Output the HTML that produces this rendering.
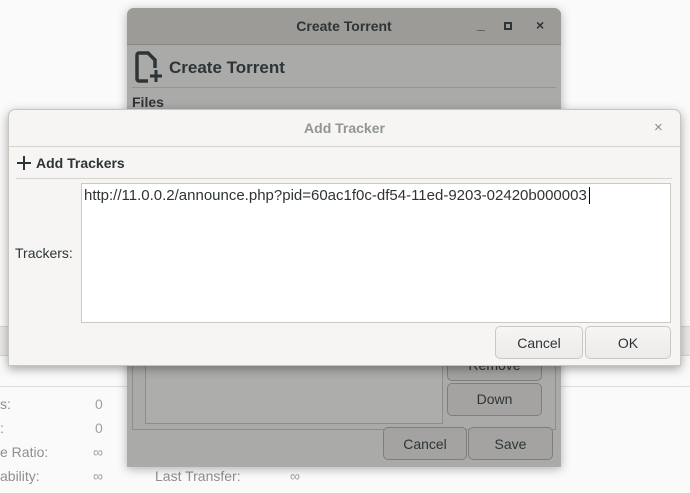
<!DOCTYPE html>
<html><head><style>
*{box-sizing:border-box;margin:0;padding:0}
body{width:690px;height:493px;overflow:hidden;background:#fafafa;font-family:"Liberation Sans",sans-serif;font-size:14px;color:#2e3436;position:relative}
.abs{position:absolute}
.btn{position:absolute;border:1px solid #cdc7c2;border-radius:5px;background:linear-gradient(#f6f5f4,#edebe9);text-align:center;font-size:14px;color:#2e3436}
.dbtn{position:absolute;border:1px solid #807e7b;border-radius:5px;background:#a4a3a1;text-align:center;font-size:14px;color:#2e3436}
</style></head><body>
<div class="abs" style="left:0;top:326px;width:690px;height:30px;background:#e9e8e7;border-top:1px solid #d8d6d4;border-bottom:1px solid #d8d6d4"></div>
<div class="abs" style="left:0;top:386px;width:690px;height:1px;background:#dedddb"></div>
<div class="abs" style="left:0;top:396px;color:#8f8f8f">s:</div>
<div class="abs" style="left:0;top:420px;color:#8f8f8f">:</div>
<div class="abs" style="left:0;top:444px;color:#8f8f8f">e Ratio:</div>
<div class="abs" style="left:0;top:468px;color:#8f8f8f">ability:</div>
<div class="abs" style="left:95px;top:396px;color:#a0a0a0">0</div>
<div class="abs" style="left:95px;top:420px;color:#a0a0a0">0</div>
<div class="abs" style="left:93px;top:444px;color:#a0a0a0">∞</div>
<div class="abs" style="left:93px;top:468px;color:#a0a0a0">∞</div>
<div class="abs" style="left:155px;top:468px;color:#8f8f8f">Last Transfer:</div>
<div class="abs" style="left:290px;top:468px;color:#a0a0a0">∞</div>

<div class="abs" style="left:127px;top:8px;width:434px;height:459px;background:#aaaaa9;border-radius:7px 7px 0 0;box-shadow:0 2px 10px rgba(0,0,0,.3);overflow:hidden">
 <div class="abs" style="left:0;top:0;width:434px;height:37px;background:#9d9b98;border-bottom:1px solid #8a8885"></div>
 <div class="abs" style="left:0;top:10px;width:434px;text-align:center;font-weight:bold;color:#2e3436">Create Torrent</div>
 <div class="abs" style="left:350px;top:8px;font-weight:bold">_</div>
 <div class="abs" style="left:377px;top:14px;width:8px;height:8px;border:2px solid #2e3436"></div>
 <div class="abs" style="left:409px;top:9px;font-weight:bold">×</div>
 <svg class="abs" style="left:7px;top:42px" width="30" height="34" viewBox="0 0 30 34"><path d="M14 31H5a2 2 0 0 1-2-2V5a2 2 0 0 1 2-2h9l7 7v8" fill="none" stroke="#2e3436" stroke-width="3.5"/><path d="M22 20v12M16 26h12" stroke="#2e3436" stroke-width="3"/></svg>
 <div class="abs" style="left:42px;top:50px;font-size:17px;font-weight:bold;color:#2e3436">Create Torrent</div>
 <div class="abs" style="left:5px;top:79px;width:424px;height:1px;background:#959492"></div>
 <div class="abs" style="left:5px;top:86px;font-weight:bold">Files</div>
 <div class="abs" style="left:5px;top:320px;width:424px;height:102px;border:1px solid #8e8d8b"></div>
 <div class="abs" style="left:18px;top:330px;width:298px;height:86px;border:1px solid #8e8d8b;background:#adadac"></div>
 <div class="dbtn" style="left:320px;top:340px;width:95px;height:33px;padding-top:8px">Remove</div>
 <div class="dbtn" style="left:320px;top:375px;width:95px;height:33px;padding-top:7px">Down</div>
 <div class="dbtn" style="left:256px;top:419px;width:84px;height:33px;padding-top:8px">Cancel</div>
 <div class="dbtn" style="left:341px;top:419px;width:85px;height:33px;padding-top:8px">Save</div>
</div>

<div class="abs" style="left:8px;top:109px;width:673px;height:257px;background:#f6f5f4;border:1px solid #c9c6c2;border-radius:7px 7px 0 0;box-shadow:0 3px 10px rgba(0,0,0,.35)">
 <div class="abs" style="left:0;top:0;width:671px;height:37px;border-bottom:1px solid #d8d4d0"></div>
 <div class="abs" style="left:0;top:10px;width:671px;text-align:center;font-weight:bold;color:#929595">Add Tracker</div>
 <div class="abs" style="left:645px;top:9px;color:#8a8d8d;font-size:15px">×</div>
 <svg class="abs" style="left:7px;top:45px" width="16" height="16"><path d="M8 1v14M1 8h14" stroke="#2e3436" stroke-width="2"/></svg>
 <div class="abs" style="left:27px;top:45px;font-weight:bold">Add Trackers</div>
 <div class="abs" style="left:7px;top:68px;width:656px;height:1px;background:#d8d4d0"></div>
 <div class="abs" style="left:6px;top:135px;color:#2e3436">Trackers:</div>
 <div class="abs" style="left:72px;top:73px;width:590px;height:140px;background:#fff;border:1px solid #cdc7c2;padding:3px 2px;font-size:15px">http://11.0.0.2/announce.php?pid=60ac1f0c-df54-11ed-9203-02420b000003<span style="border-left:1px solid #000;margin-left:2px"></span></div>
 <div class="btn" style="left:486px;top:216px;width:88px;height:33px;padding-top:8px">Cancel</div>
 <div class="btn" style="left:576px;top:216px;width:86px;height:33px;padding-top:8px">OK</div>
</div>
</body></html>
